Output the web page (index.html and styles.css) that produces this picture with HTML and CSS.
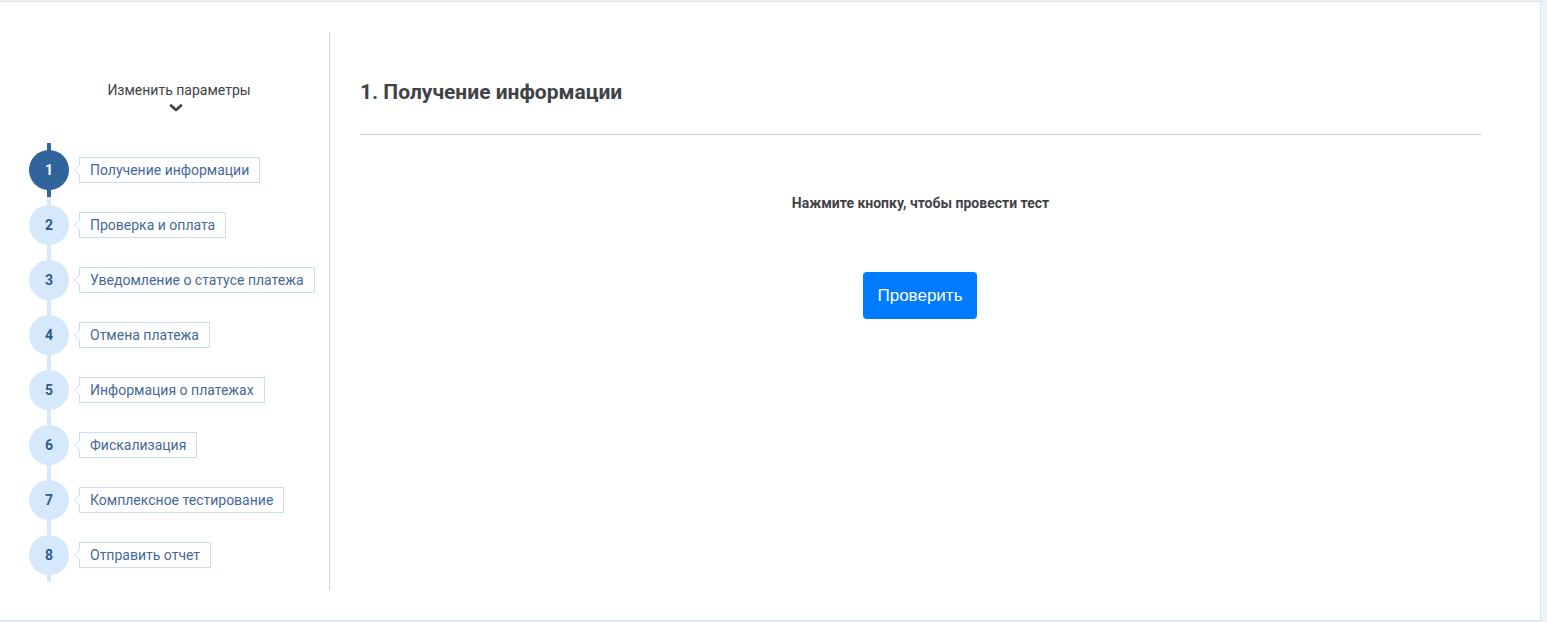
FILE: index.html
```html
<!DOCTYPE html>
<html lang="ru">
<head>
<meta charset="utf-8">
<title>Тест</title>
<link rel="stylesheet" href="styles.css">
</head>
<body>
<div class="card">
  <aside class="sidebar">
    <div class="params">
      <div class="params-title">Изменить параметры</div>
      <svg class="chevron" width="14" height="10" viewBox="0 0 14 10"><path d="M2 2.5 L7 7 L12 2.5" fill="none" stroke="#3f4246" stroke-width="2.6" stroke-linecap="round" stroke-linejoin="round"/></svg>
    </div>
    <ol class="timeline">
      <li class="step active"><span class="num">1</span><span class="label">Получение информации</span></li>
      <li class="step"><span class="num">2</span><span class="label">Проверка и оплата</span></li>
      <li class="step"><span class="num">3</span><span class="label">Уведомление о статусе платежа</span></li>
      <li class="step"><span class="num">4</span><span class="label">Отмена платежа</span></li>
      <li class="step"><span class="num">5</span><span class="label">Информация о платежах</span></li>
      <li class="step"><span class="num">6</span><span class="label">Фискализация</span></li>
      <li class="step"><span class="num">7</span><span class="label">Комплексное тестирование</span></li>
      <li class="step"><span class="num">8</span><span class="label">Отправить отчет</span></li>
    </ol>
  </aside>
  <main class="main">
    <h1 class="title">1. Получение информации</h1>
    <p class="hint">Нажмите кнопку, чтобы провести тест</p>
    <div class="actions"><button class="btn" type="button">Проверить</button></div>
  </main>
</div>
</body>
</html>
```
FILE: styles.css
```css
* { box-sizing: border-box; }
html, body { margin: 0; padding: 0; }
body {
  background: #eef1f5;
  font-family: Roboto, "Liberation Sans", Arial, sans-serif;
  height: 622px;
  overflow: hidden;
}
.card {
  width: 1541px;
  height: 620px;
  margin-top: 1px;
  background: #fff;
  border-top: 1px solid #dde1e6;
  border-right: 1px solid #dde1e6;
  border-bottom: 1px solid #dde1e6;
  display: flex;
  align-items: flex-start;
  padding-top: 30px;
}
.sidebar {
  width: 330px;
  height: 558px;
  border-right: 1px solid #cfcfcf;
  padding-left: 29px;
  flex: none;
}
.params {
  padding-top: 48px;
  text-align: center;
}
.params-title {
  font-size: 14px;
  line-height: 20px;
  color: #3e4246;
}
.chevron {
  display: block;
  margin: 3px auto 0;
  position: relative;
  left: -3px;
}
.timeline {
  list-style: none;
  margin: 30px 0 0;
  padding: 7px 0;
  position: relative;
  display: flex;
  flex-direction: column;
  gap: 15px;
}
.timeline::before {
  content: "";
  position: absolute;
  left: 18px;
  top: 0;
  bottom: 0;
  width: 4px;
  background: #d6e9fc;
}
.step {
  position: relative;
  display: flex;
  align-items: center;
  height: 40px;
}
.step.active::before {
  content: "";
  position: absolute;
  left: 18px;
  top: -7px;
  bottom: -7px;
  width: 4px;
  background: #31649a;
}
.num {
  position: relative;
  z-index: 1;
  width: 40px;
  height: 40px;
  border-radius: 50%;
  background: #d6e9fc;
  color: #2d5b90;
  font-weight: 700;
  font-size: 14px;
  display: flex;
  align-items: center;
  justify-content: center;
  flex: none;
}
.step.active .num {
  background: #31649a;
  color: #fff;
}
.label {
  position: relative;
  margin-left: 10px;
  height: 26px;
  line-height: 24px;
  padding: 0 10px;
  border: 1px solid #c6def8;
  background: #fff;
  color: #45699b;
  font-size: 14px;
  white-space: nowrap;
}
.label::before,
.label::after {
  content: "";
  position: absolute;
  top: 50%;
  width: 0;
  height: 0;
  border-style: solid;
  border-color: transparent;
}
.label::before {
  left: -6px;
  margin-top: -6px;
  border-width: 6px 6px 6px 0;
  border-right-color: #c6def8;
}
.label::after {
  left: -5px;
  margin-top: -5px;
  border-width: 5px 5px 5px 0;
  border-right-color: #fff;
}
.main {
  flex: 1;
  padding: 0 59px 0 30px;
}
.title {
  margin: 48px 0 0;
  font-size: 21px;
  line-height: 24px;
  font-weight: 700;
  color: #3f4347;
  padding-bottom: 30px;
  border-bottom: 1px solid #cccccc;
}
.hint {
  margin: 58px 0 0;
  text-align: center;
  font-size: 14px;
  line-height: 20px;
  font-weight: 700;
  color: #3f4347;
}
.actions {
  margin-top: 59px;
  display: flex;
  justify-content: center;
  padding-right: 1px;
}
.btn {
  width: 114px;
  height: 47px;
  border: 0;
  border-radius: 4px;
  background: #007bff;
  color: #fff;
  font-family: "Liberation Sans", Arial, sans-serif;
  font-size: 17px;
  padding: 0;
  cursor: pointer;
}
```
